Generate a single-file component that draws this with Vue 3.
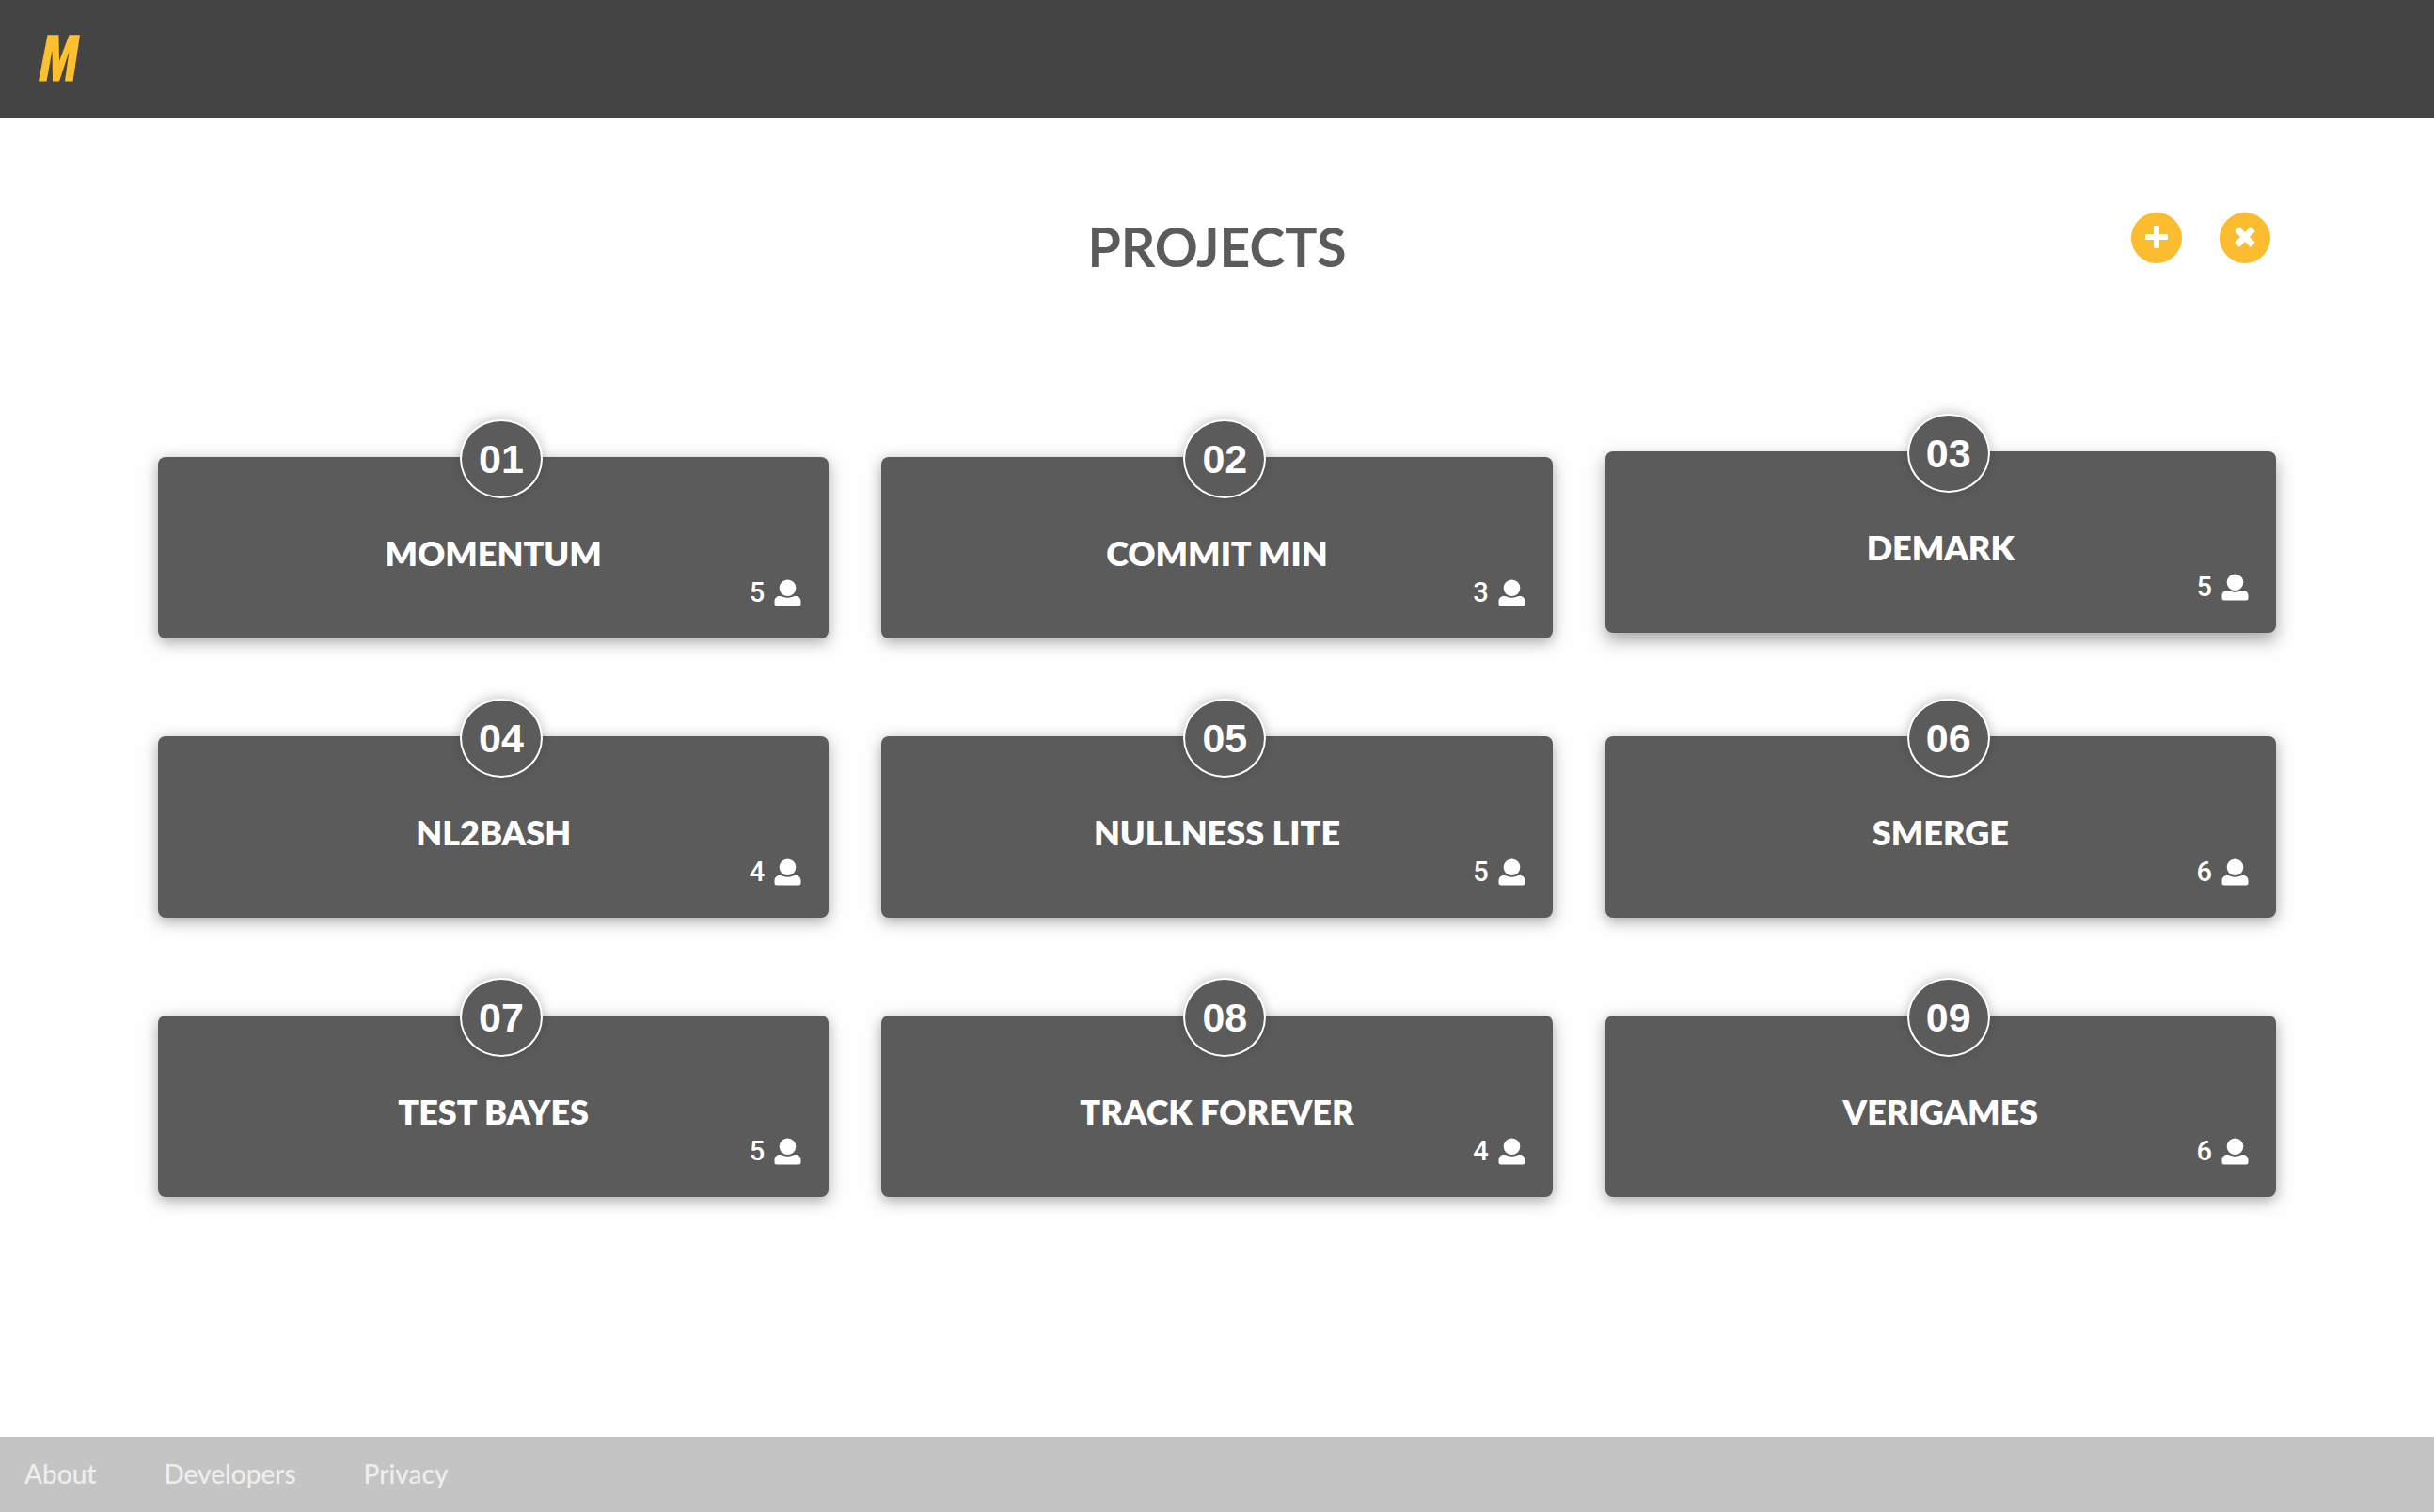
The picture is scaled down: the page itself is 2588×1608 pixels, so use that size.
<script setup>
const projects = [
  { name: 'Momentum', members: 5 },
  { name: 'Commit Min', members: 3 },
  { name: 'Demark', members: 5, raised: true },
  { name: 'NL2Bash', members: 4 },
  { name: 'Nullness Lite', members: 5 },
  { name: 'Smerge', members: 6 },
  { name: 'Test Bayes', members: 5 },
  { name: 'Track Forever', members: 4 },
  { name: 'Verigames', members: 6 },
]
const links = ['About', 'Developers', 'Privacy']
const number = (i) => String(i + 1).padStart(2, '0')
</script>

<template>
  <div class="page">
    <header class="topbar">
      <a class="logo" href="#" aria-label="Home">
        <svg viewBox="0 0 44 50" width="44" height="50" aria-hidden="true">
          <path d="M9.5 0.3H21.5L22 28L32.5 0.3H44L36.5 49.6H28L32.5 17.5L22 49.6H15L14.5 16.5L8.5 49.6H0Z" />
        </svg>
      </a>
    </header>

    <main class="content">
      <div class="heading">
        <h1>PROJECTS</h1>
        <div class="actions">
          <button type="button" aria-label="Add project">
            <svg viewBox="0 0 54 54" aria-hidden="true">
              <rect x="24" y="14" width="6" height="24" rx="1" />
              <rect x="15" y="23" width="24" height="6" rx="1" />
            </svg>
          </button>
          <button type="button" aria-label="Remove project">
            <svg viewBox="0 0 54 54" aria-hidden="true">
              <g transform="rotate(45 27 26)">
                <rect x="23.5" y="14" width="7" height="24" rx="1.5" />
                <rect x="15" y="22.5" width="24" height="7" rx="1.5" />
              </g>
            </svg>
          </button>
        </div>
      </div>

      <div class="projects">
        <a
          v-for="(project, i) in projects"
          :key="project.name"
          class="card"
          :class="{ raised: project.raised }"
          href="#"
        >
          <span class="badge">{{ number(i) }}</span>
          <h2>{{ project.name.toUpperCase() }}</h2>
          <span class="members">
            {{ project.members }}
            <svg viewBox="0 0 29 29" width="29" height="29" aria-hidden="true">
              <path d="M6 18C7.5 18 8.5 18.3 9.5 18.7C12.5 20.1 16.5 20.1 19.5 18.7C20.5 18.3 21.5 18 23 18C26.5 18 28.5 20.5 28.5 23.5V26C28.5 27.8 27.5 28.5 26 28.5H3C1.5 28.5 0.5 27.8 0.5 26V23.5C0.5 20.5 2.5 18 6 18Z" />
              <circle cx="14.5" cy="9.2" r="8.8" />
            </svg>
          </span>
        </a>
      </div>
    </main>

    <footer class="footer">
      <a v-for="link in links" :key="link" href="#">{{ link }}</a>
    </footer>
  </div>
</template>

<style>
body {
  margin: 0;
  background: #fefefe;
}
</style>

<style scoped>
.page {
  display: flex;
  flex-direction: column;
  min-height: 100vh;
  font-family: Lato, "Liberation Sans", sans-serif;
}
.topbar {
  display: flex;
  align-items: center;
  box-sizing: border-box;
  height: 126px;
  padding: 0 41px 2px;
  background: #444;
}
.logo svg {
  display: block;
  fill: #fdbf2d;
}
.content {
  flex: 1;
  padding: 98px 168px 64px;
}
.heading {
  display: grid;
  grid-template-columns: 1fr auto 1fr;
  margin-bottom: 186px;
}
h1 {
  grid-column: 2;
  margin: 0;
  color: #5b5b5b;
  font-size: 57px;
  font-weight: 700;
  line-height: 76px;
}
.actions {
  display: flex;
  justify-content: flex-end;
  align-items: flex-start;
  gap: 40px;
  padding: 2px 6px 0 0;
}
button {
  width: 54px;
  height: 54px;
  padding: 0;
  border: 0;
  border-radius: 50%;
  background: #fbbc30;
  cursor: pointer;
}
button svg {
  display: block;
  fill: #fff;
}
.projects {
  display: grid;
  grid-template-columns: repeat(3, 1fr);
  gap: 104px 56px;
}
.card {
  position: relative;
  display: flex;
  flex-direction: column;
  padding: 78px 29px 33px;
  border-radius: 8px;
  background: #5b5b5b;
  box-shadow: 0 4px 16px rgba(0, 0, 0, 0.35);
  color: #fff;
  text-decoration: none;
}
.raised {
  transform: translateY(-6px);
  box-shadow: 0 8px 18px rgba(0, 0, 0, 0.35);
}
.badge {
  position: absolute;
  top: -40px;
  left: 45%;
  box-sizing: border-box;
  width: 88px;
  height: 84px;
  border: 2px solid #fff;
  border-radius: 50%;
  background: #5b5b5b;
  box-shadow: 0 -2px 12px rgba(0, 0, 0, 0.2);
  font: 700 43px/80px "Liberation Sans", Arial, sans-serif;
  text-align: center;
}
h2 {
  margin: 0 0 2px;
  font-size: 36px;
  font-weight: 800;
  line-height: 48px;
  text-align: center;
}
.members {
  display: flex;
  justify-content: flex-end;
  align-items: center;
  gap: 10px;
  height: 32px;
  font: 500 29px/32px Roboto, "Liberation Sans", sans-serif;
}
.members svg {
  fill: #fff;
}
.footer {
  display: flex;
  align-items: center;
  box-sizing: border-box;
  gap: 72px;
  height: 80px;
  padding: 0 26px 2px;
  background: #c4c4c4;
}
.footer a {
  color: #eee;
  font-size: 28px;
  font-weight: 500;
  line-height: 40px;
  text-decoration: none;
}
</style>
